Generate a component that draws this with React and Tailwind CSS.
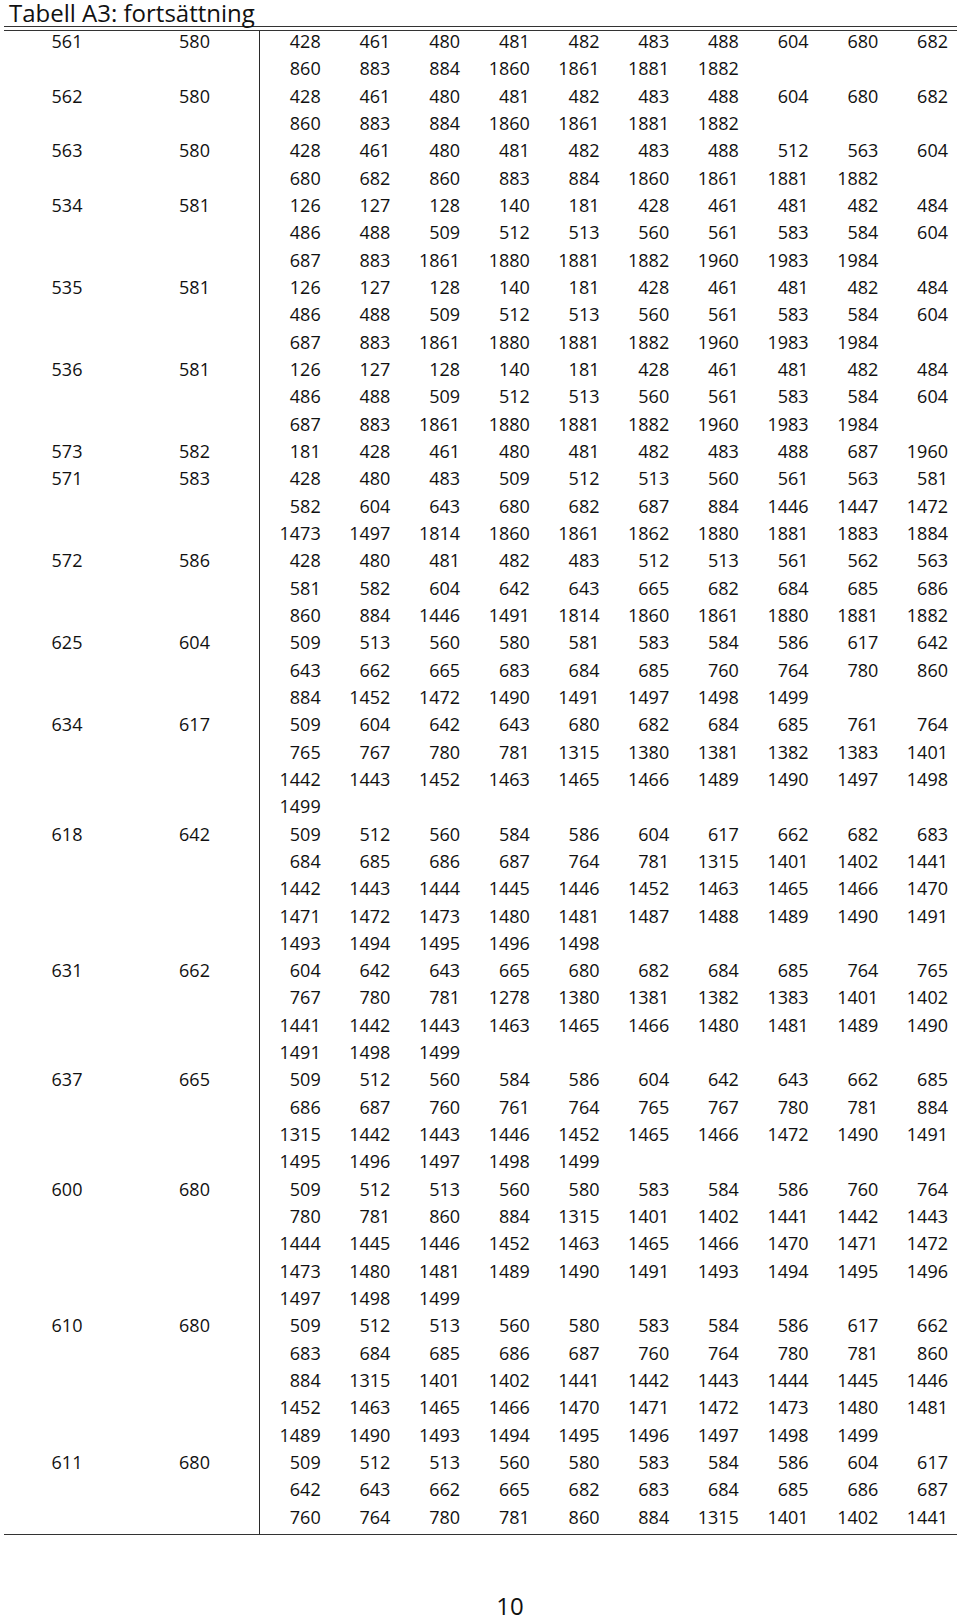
import React from "react";

// Tabell A3 (fortsättning) – grupper med två nyckelvärden och en lista värden
const groups = [
  ["561", "580", [[428, 461, 480, 481, 482, 483, 488, 604, 680, 682], [860, 883, 884, 1860, 1861, 1881, 1882]]],
  ["562", "580", [[428, 461, 480, 481, 482, 483, 488, 604, 680, 682], [860, 883, 884, 1860, 1861, 1881, 1882]]],
  ["563", "580", [[428, 461, 480, 481, 482, 483, 488, 512, 563, 604], [680, 682, 860, 883, 884, 1860, 1861, 1881, 1882]]],
  ["534", "581", [[126, 127, 128, 140, 181, 428, 461, 481, 482, 484], [486, 488, 509, 512, 513, 560, 561, 583, 584, 604], [687, 883, 1861, 1880, 1881, 1882, 1960, 1983, 1984]]],
  ["535", "581", [[126, 127, 128, 140, 181, 428, 461, 481, 482, 484], [486, 488, 509, 512, 513, 560, 561, 583, 584, 604], [687, 883, 1861, 1880, 1881, 1882, 1960, 1983, 1984]]],
  ["536", "581", [[126, 127, 128, 140, 181, 428, 461, 481, 482, 484], [486, 488, 509, 512, 513, 560, 561, 583, 584, 604], [687, 883, 1861, 1880, 1881, 1882, 1960, 1983, 1984]]],
  ["573", "582", [[181, 428, 461, 480, 481, 482, 483, 488, 687, 1960]]],
  ["571", "583", [[428, 480, 483, 509, 512, 513, 560, 561, 563, 581], [582, 604, 643, 680, 682, 687, 884, 1446, 1447, 1472], [1473, 1497, 1814, 1860, 1861, 1862, 1880, 1881, 1883, 1884]]],
  ["572", "586", [[428, 480, 481, 482, 483, 512, 513, 561, 562, 563], [581, 582, 604, 642, 643, 665, 682, 684, 685, 686], [860, 884, 1446, 1491, 1814, 1860, 1861, 1880, 1881, 1882]]],
  ["625", "604", [[509, 513, 560, 580, 581, 583, 584, 586, 617, 642], [643, 662, 665, 683, 684, 685, 760, 764, 780, 860], [884, 1452, 1472, 1490, 1491, 1497, 1498, 1499]]],
  ["634", "617", [[509, 604, 642, 643, 680, 682, 684, 685, 761, 764], [765, 767, 780, 781, 1315, 1380, 1381, 1382, 1383, 1401], [1442, 1443, 1452, 1463, 1465, 1466, 1489, 1490, 1497, 1498], [1499]]],
  ["618", "642", [[509, 512, 560, 584, 586, 604, 617, 662, 682, 683], [684, 685, 686, 687, 764, 781, 1315, 1401, 1402, 1441], [1442, 1443, 1444, 1445, 1446, 1452, 1463, 1465, 1466, 1470], [1471, 1472, 1473, 1480, 1481, 1487, 1488, 1489, 1490, 1491], [1493, 1494, 1495, 1496, 1498]]],
  ["631", "662", [[604, 642, 643, 665, 680, 682, 684, 685, 764, 765], [767, 780, 781, 1278, 1380, 1381, 1382, 1383, 1401, 1402], [1441, 1442, 1443, 1463, 1465, 1466, 1480, 1481, 1489, 1490], [1491, 1498, 1499]]],
  ["637", "665", [[509, 512, 560, 584, 586, 604, 642, 643, 662, 685], [686, 687, 760, 761, 764, 765, 767, 780, 781, 884], [1315, 1442, 1443, 1446, 1452, 1465, 1466, 1472, 1490, 1491], [1495, 1496, 1497, 1498, 1499]]],
  ["600", "680", [[509, 512, 513, 560, 580, 583, 584, 586, 760, 764], [780, 781, 860, 884, 1315, 1401, 1402, 1441, 1442, 1443], [1444, 1445, 1446, 1452, 1463, 1465, 1466, 1470, 1471, 1472], [1473, 1480, 1481, 1489, 1490, 1491, 1493, 1494, 1495, 1496], [1497, 1498, 1499]]],
  ["610", "680", [[509, 512, 513, 560, 580, 583, 584, 586, 617, 662], [683, 684, 685, 686, 687, 760, 764, 780, 781, 860], [884, 1315, 1401, 1402, 1441, 1442, 1443, 1444, 1445, 1446], [1452, 1463, 1465, 1466, 1470, 1471, 1472, 1473, 1480, 1481], [1489, 1490, 1493, 1494, 1495, 1496, 1497, 1498, 1499]]],
  ["611", "680", [[509, 512, 513, 560, 580, 583, 584, 586, 604, 617], [642, 643, 662, 665, 682, 683, 684, 685, 686, 687], [760, 764, 780, 781, 860, 884, 1315, 1401, 1402, 1441]]],
];

function Group({ a, b, lines }) {
  return (
    <div className="flex">
      <div className="w-[126px] text-center h-[27.33px] leading-[21.5px]">{a}</div>
      <div className="w-[129px] text-center h-[27.33px] leading-[21.5px]">{b}</div>
      <div className="flex-1 border-l border-[#2a2a2a]">
        {lines.map((line, i) => (
          <div key={i} className="grid grid-cols-10 h-[27.33px] leading-[21.5px]">
            {line.map((n, j) => (
              <div key={j} className="text-right pr-[9px]">
                {n}
              </div>
            ))}
          </div>
        ))}
      </div>
    </div>
  );
}

export default function App() {
  return (
    <div className="w-[960px] h-[1618px] bg-white text-[#111] font-['Open_Sans',sans-serif] overflow-hidden">
      <div className="h-[26px] pl-[9px] text-[24px] leading-[25px]">Tabell A3: fortsättning</div>
      <div className="mx-[4px] w-[953px]">
        <div className="h-[5px] border-y-[1.5px] border-[#333]" />
        <div className="text-[18px] border-b-[1.5px] border-[#333]">
          {groups.map(([a, b, lines]) => (
            <Group key={a + b} a={a} b={b} lines={lines} />
          ))}
        </div>
      </div>
      <div className="mt-[57px] pl-[60px] text-center text-[24px] leading-[27px]">10</div>
    </div>
  );
}
